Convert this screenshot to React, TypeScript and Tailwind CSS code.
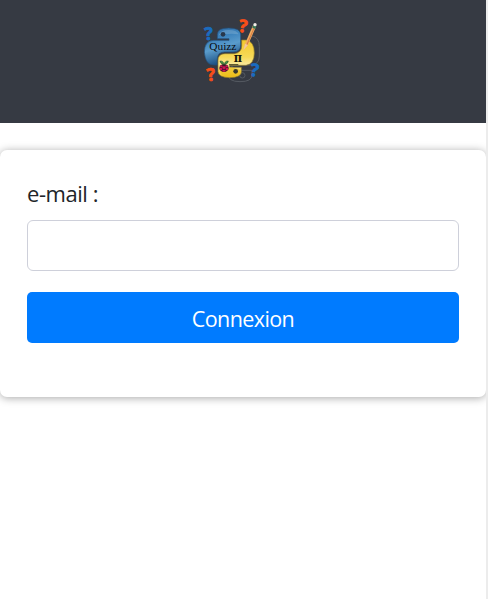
function QuizzLogo() {
  return (
    <svg className="block h-20 w-20" viewBox="0 0 240 240" fill="none" role="img" aria-label="Quizz">
      <defs>
        <linearGradient id="blue" x1="0" y1="0" x2="0.3" y2="1">
          <stop offset="0" stopColor="#2b6299" />
          <stop offset="0.35" stopColor="#3d83bd" />
          <stop offset="0.6" stopColor="#5a9ccc" />
          <stop offset="1" stopColor="#1c4f80" />
        </linearGradient>
        <linearGradient id="yellow" x1="0" y1="0" x2="0" y2="1">
          <stop offset="0" stopColor="#f4c92e" />
          <stop offset="0.45" stopColor="#f6d957" />
          <stop offset="0.65" stopColor="#f9e99a" />
          <stop offset="1" stopColor="#edbd16" />
        </linearGradient>
      </defs>
      <g stroke="#555a62" strokeWidth="3">
        <path d="M170 78h10q22 4 22 32v28q0 27-27 27h-37q-30 0-30 27 0 23 36 23t36-20v-14h-44" />
        <circle cx="151" cy="196" r="8" />
      </g>
      <path d="M76 88V73q0-19 34-19t36 18v32q0 22-22 22H98q-22 0-22 22v17H65q-25 0-28-38 0-35 28-36h46v-5H76Z" fill="url(#blue)" stroke="#234e79" strokeWidth="2" />
      <path d="M80 76q5-16 30-16t30 13q-25-5-60 3Z" fill="#8ab7d8" opacity=".4" />
      <circle cx="93" cy="73" r="7" fill="#28384b" />
      <path d="M149 90h13q25 4 25 39 0 33-25 37h-49v6h35v14q0 16-35 17-34-1-35-18v-34q0-20 21-20h28q22-3 22-23V90Z" fill="url(#yellow)" stroke="#8c782c" strokeWidth="2" />
      <path d="M83 178q35-15 64 4 0 18-34 19-30-2-30-23Z" fill="#edbd16" opacity=".6" />
      <circle cx="131" cy="184" r="7" fill="#38382d" />
      <text x="52" y="120" fill="#080a10" fontFamily="Liberation Serif, serif" fontSize="34" textLength="81" lengthAdjust="spacingAndGlyphs">Quizz</text>
      <text x="125" y="156" fill="#16160b" fontFamily="DejaVu Serif, serif" fontWeight="bold" fontSize="38" textLength="25" lengthAdjust="spacingAndGlyphs">π</text>
      <path d="M111 164h28" stroke="#4a4320" strokeWidth="3" />
      <ellipse cx="96" cy="174" rx="14" ry="12" fill="#43152a" />
      <g fill="#cf1650">
        <ellipse cx="96" cy="173" rx="5" ry="4" />
        <ellipse cx="88" cy="169" rx="4" ry="3" />
        <ellipse cx="104" cy="169" rx="4" ry="3" />
        <ellipse cx="87" cy="177" rx="4" ry="4" />
        <ellipse cx="105" cy="177" rx="4" ry="4" />
        <ellipse cx="96" cy="182" rx="5" ry="3" />
      </g>
      <path d="M96 164q-12-3-12-11 11-1 12 11Zm1 0q1-12 12-11 0 8-12 11Z" fill="#3f9743" stroke="#263b22" strokeWidth="1.5" />
      <g fontFamily="Open Sans, sans-serif" fontSize="52" fontWeight="bold" textAnchor="middle">
        <text x="50" y="89" fill="#1a6cc0" stroke="#1a6cc0" strokeWidth="2.5" transform="rotate(-4 50 70)">?</text>
        <text x="154" y="66" fill="#f84e18" stroke="#f84e18" strokeWidth="2.5" transform="rotate(8 153 47)">?</text>
        <text x="57" y="212" fill="#f84e18" stroke="#f84e18" strokeWidth="2.5" transform="rotate(-6 57 193)">?</text>
        <text x="188" y="198" fill="#1a6cc0" stroke="#1a6cc0" strokeWidth="2.5" transform="rotate(8 186 179)">?</text>
      </g>
      <path d="m154 121 5-20 24-55 9 4-24 55Z" fill="#f0ad62" />
      <path d="m164 106 24-56" stroke="#d77942" strokeWidth="3" />
      <path d="m154 121 5-20 9 4Z" fill="#f4c99d" />
      <path d="m181 53 3-9 9 4-3 9Z" fill="#377756" />
      <circle cx="189" cy="44" r="5" fill="#f3eee8" />
    </svg>
  );
}

export default function App() {
  return (
    <div className="h-[599px] w-[488px] overflow-hidden border-r-2 border-[#ececec] bg-white font-['Open_Sans','Noto_Sans',sans-serif] text-[22px] text-[#212529]">
      <header className="flex h-[123px] justify-center bg-[#363a43] pt-[10px] pr-[22px]">
        <QuizzLogo />
      </header>
      <main className="pt-[27px]">
        <form className="h-[247px] rounded-[7px] bg-white px-[27px] pt-[27px] shadow-[0_1px_8px_rgba(0,0,0,0.35)]" onSubmit={(event) => event.preventDefault()}>
          <label htmlFor="email" className="block h-[43px] leading-[32px] tracking-[-0.45px]">e-mail :</label>
          <input id="email" type="email" className="block h-[51px] w-full rounded-[6px] border border-[#ced0da] px-4 outline-none" />
          <button type="submit" className="mt-[21px] block h-[51px] w-full rounded-[5px] bg-[#007bff] pt-px text-center text-[21.5px] leading-[47px] tracking-[-0.6px] text-white">Connexion</button>
        </form>
      </main>
    </div>
  );
}
